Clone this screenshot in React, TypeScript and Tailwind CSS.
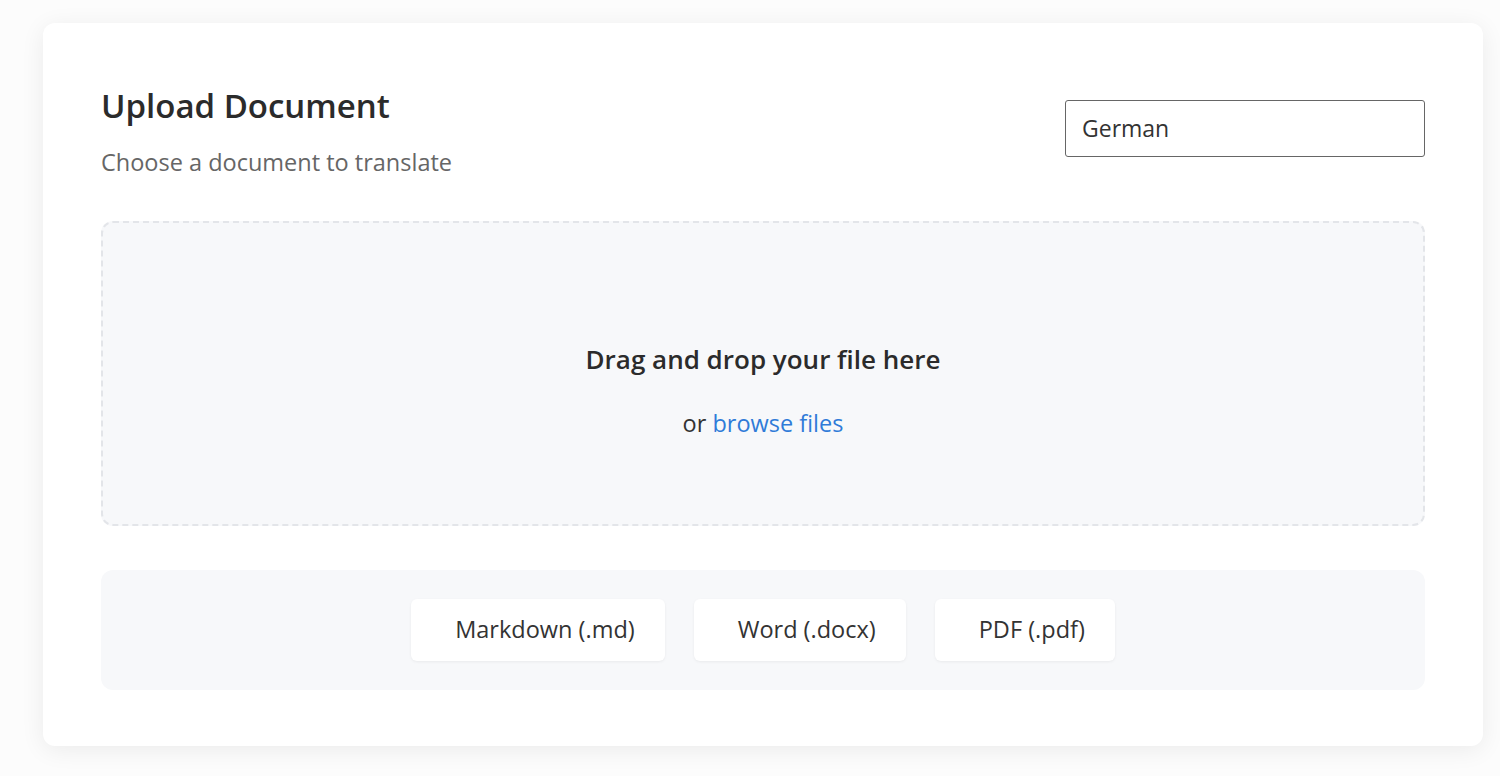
import React from "react";

export default function App() {
  const formats = ["Markdown (.md)", "Word (.docx)", "PDF (.pdf)"];
  return (
    <div
      className="min-h-[776px] w-[1500px] bg-[#fcfcfc] pt-[23px] pl-[43px]"
      style={{ fontFamily: '"Open Sans", "Noto Sans", sans-serif' }}
    >
      <div className="w-[1440px] h-[723px] rounded-[12px] bg-white shadow-[0_4px_24px_rgba(0,0,0,0.07)] px-[58px] pt-[59px]">
        <div className="flex items-start justify-between">
          <div>
            <h1 className="text-[33px] leading-[48px] font-semibold text-[#2b2b2b]">
              Upload Document
            </h1>
            <p className="mt-[16px] text-[23.5px] leading-[32px] text-[#666666]">
              Choose a document to translate
            </p>
          </div>
          <div className="mt-[18px] w-[360px] h-[57px] rounded-[3px] border border-[#666666] flex items-center pl-[16px] text-[23px] text-[#333333]">
            German
          </div>
        </div>
        <div className="mt-[43px] h-[305px] rounded-[12px] border-2 border-dashed border-[#e3e5e9] bg-[#f7f8fa] flex flex-col items-center pt-[118px]">
          <div className="text-[26px] leading-[36px] font-semibold text-[#2b2b2b]">
            Drag and drop your file here
          </div>
          <div className="mt-[30px] text-[23.5px] leading-[32px] text-[#333333]">
            or <span className="text-[#2f7bd8]">browse files</span>
          </div>
        </div>
        <div className="mt-[44px] h-[120px] rounded-[12px] bg-[#f7f8fa] flex items-center justify-center gap-[29px]">
          {formats.map((f) => (
            <div
              key={f}
              className="h-[62px] rounded-[6px] bg-white shadow-[0_1px_3px_rgba(0,0,0,0.06)] flex items-center pl-[44px] pr-[30px] text-[23.5px] text-[#333333]"
            >
              {f}
            </div>
          ))}
        </div>
      </div>
    </div>
  );
}
